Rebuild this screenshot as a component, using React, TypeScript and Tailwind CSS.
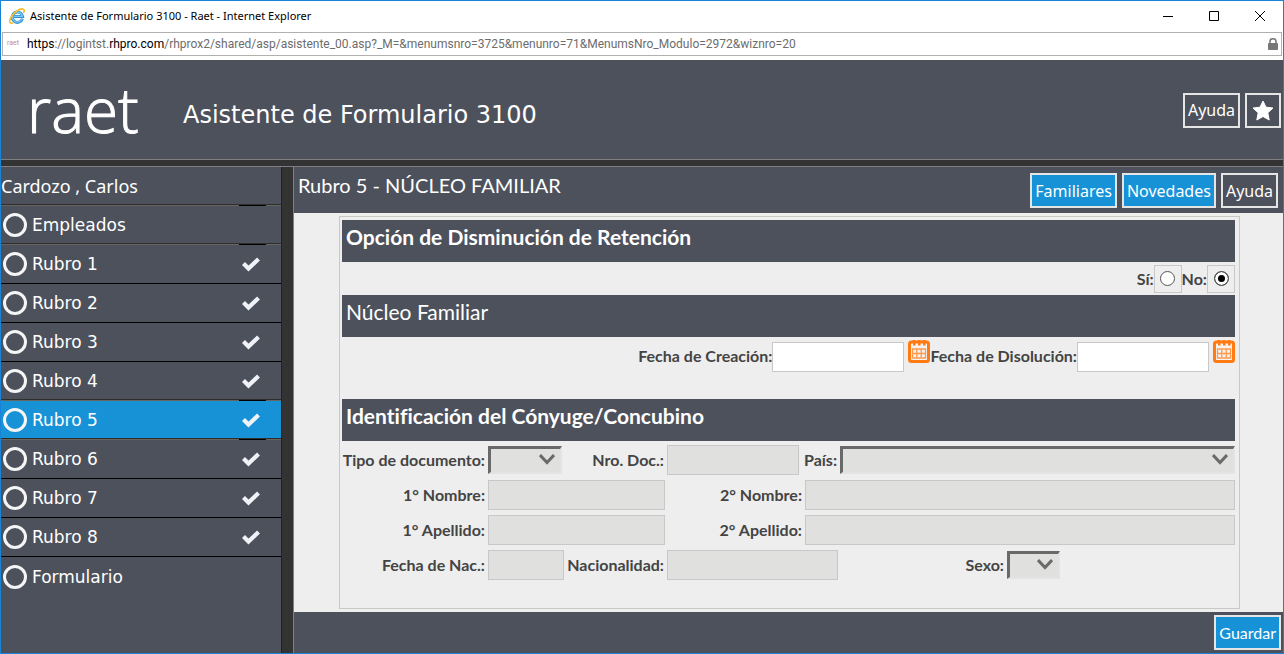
import { ReactNode, useState } from "react"

interface Paso {
    name: string,
    done?: boolean,
    soft?: boolean,
}

const pasos: Paso[] = [
    { name: "Empleados", soft: true },
    { name: "Rubro 1", done: true },
    { name: "Rubro 2", done: true },
    { name: "Rubro 3", done: true },
    { name: "Rubro 4", done: true, soft: true },
    { name: "Rubro 5", done: true, soft: true },
    { name: "Rubro 6", done: true },
    { name: "Rubro 7", done: true },
    { name: "Rubro 8", done: true },
    { name: "Formulario" },
]

function IeLogo() {
    return (
        <svg viewBox="0 0 16 16" className="size-4" aria-hidden="true">
            <path d="M13.4 10.8A5.2 5.2 0 1 1 13.6 8.400H5" fill="none" stroke="#2f8fd0" strokeWidth="3" />
            <path d="M13.2 10.6A5 5 0 1 1 13.4 8.400H5" fill="none" stroke="#7ccbf2" strokeWidth="1.300" />
            <path d="M3.500 15C-.5 16 0 11.500 3.500 7.200S12-.3 14.500 1.300c1 .7.800 2 .2 3.200" fill="none" stroke="#f7bd2a" strokeWidth="1.600" strokeLinecap="round" />
        </svg>
    )
}

function Candado() {
    return (
        <svg viewBox="0 0 10 12" className="h-3 w-[10px]" aria-hidden="true">
            <path d="M2 6V3.500a3 2.700 0 0 1 6 0V6" fill="none" stroke="#777" strokeWidth="1.500" />
            <rect y="5" width="10" height="7" rx="1" fill="#777" />
        </svg>
    )
}

function Calendario() {
    return (
        <svg viewBox="0 0 22 23" className="h-[23px] w-[22px]" aria-hidden="true">
            <rect x="1.500" y="2" width="19" height="19.500" rx="2" fill="#f6f2ef" stroke="#ff7a12" strokeWidth="3" />
            <path d="M4.500 0h3v2h-3zM9.500 0h3v2h-3zM14.500 0h3v2h-3z" fill="#ff7a12" />
            <path d="M5 1h2.500v4.500H5zM10 1h2.500v4.500H10zM15 1h2.500v4.500H15z" fill="#ff7a12" />
            <path d="M4.500 9h13v9h-13zM4.500 13.500h13M8.800 9v9M13.200 9v9" fill="none" stroke="#ff9a4d" strokeWidth="1.300" />
        </svg>
    )
}

function Estrella() {
    return (
        <svg viewBox="0 0 22 21" className="h-[21px] w-[22px]" aria-hidden="true">
            <path d="M11 1l3 6.200 7 .8-5.200 4.800L17.200 20 11 16.500 4.800 20l1.400-7.200L1 8l7-.8z" fill="#fff" strokeLinejoin="round" stroke="#fff" />
        </svg>
    )
}

function Tilde() {
    return (
        <svg viewBox="0 0 20 16" className="h-4 w-5" aria-hidden="true">
            <path d="M2.500 7.500l5 5 10-9.500" fill="none" stroke="#f0f2f8" strokeWidth="4.200" />
        </svg>
    )
}

function Boton(props: { children: ReactNode, blue?: boolean, label?: string }) {
    return (
        <button type="button" aria-label={props.label} className={`flex h-[35px] items-center border-2 border-neutral-200 px-[3px] font-['Noto_Sans',sans-serif] text-base whitespace-nowrap text-white ${props.blue ? "bg-[#1892d6]" : "bg-[#4d515c]"}`}>
            {props.children}
        </button>
    )
}

function Titulo(props: { children: ReactNode, bold?: boolean }) {
    return (
        <h2 className={`h-[42px] bg-[#4d515c] pl-1 text-[21px] leading-[34px] text-white ${props.bold ? "font-bold" : "font-normal"}`}>{props.children}</h2>
    )
}

function Etiqueta(props: { children: ReactNode, htmlFor: string, width: string }) {
    return (
        <label htmlFor={props.htmlFor} className={`shrink-0 pr-[3px] text-right whitespace-nowrap ${props.width}`}>{props.children}</label>
    )
}

function Texto(props: { id: string, width: string }) {
    return (
        <input id={props.id} type="text" disabled className={`h-[30px] min-w-0 border border-[#c8c8c8] bg-[#e0e0de] px-1 ${props.width}`} />
    )
}

function Lista(props: { id: string, width: string }) {
    return (
        <div className={`relative h-7 min-w-0 ${props.width}`}>
            <select id={props.id} disabled className="h-full w-full appearance-none border-t-[3px] border-r-2 border-b-2 border-l-[3px] border-t-[#696969] border-r-[#e3e3e3] border-b-[#e3e3e3] border-l-[#696969] bg-[#e0e0de] opacity-100">
                <option></option>
            </select>
            <svg viewBox="0 0 16 11" className="pointer-events-none absolute top-2 right-[7px] h-[11px] w-4" aria-hidden="true">
                <path d="M1 1l7 7.500L15 1" fill="none" stroke="#6a6a6a" strokeWidth="3" />
            </svg>
        </div>
    )
}

function Fecha(props: { id: string, label: string }) {
    return (
        <div className="flex">
            <label htmlFor={props.id} className="pt-[5px] leading-[22px] whitespace-nowrap">{props.label}</label>
            <input id={props.id} type="text" className="mt-[2px] h-[30px] w-[132px] border border-[#c8c8c8] bg-white px-1" />
            <button type="button" aria-label="Calendario" className="ml-1 h-[23px]"><Calendario /></button>
        </div>
    )
}

function Opcion(props: { id: string, label: string, checked: boolean, onChange: () => void }) {
    return (
        <label htmlFor={props.id} className="flex items-center">
            {props.label}
            <span className="flex size-7 items-center justify-center border border-[#c8c8c8]">
                <input id={props.id} type="radio" name="disminucion" checked={props.checked} onChange={props.onChange} className="size-[15px] appearance-none rounded-full border border-[#555] bg-white checked:bg-black checked:shadow-[inset_0_0_0_3px_#fff]" />
            </span>
        </label>
    )
}

function Divisor(props: { soft?: boolean }) {
    if (!props.soft) return <div className="h-px bg-black"></div>
    return (
        <div className="flex h-[2px] justify-end border-t border-[#2e2e2e] bg-[#66665f] pr-[15px]">
            <span className="w-[27px] bg-black"></span>
        </div>
    )
}

function Menu() {
    const [active, setActive] = useState("Rubro 5")
    return (
        <nav className="w-[280px] shrink-0 bg-[#4d515c] font-['DejaVu_Sans',sans-serif] text-[17px] text-white">
            <div className="flex h-[39px] flex-col">
                <div className="flex-1 pt-1 font-['Noto_Sans',sans-serif] text-lg leading-[30px]">Cardozo , Carlos</div>
                <Divisor soft />
            </div>
            {pasos.map((paso, i) => (
                <div key={paso.name} className="flex h-[39px] flex-col">
                    <button
                        type="button"
                        onClick={() => setActive(paso.name)}
                        className={`flex w-full flex-1 items-center pr-[20px] pl-[2px] text-left ${paso.name === active ? "bg-[#1892d6]" : ""}`}
                    >
                        <span className="mr-[5px] size-6 rounded-full border-[3px] border-neutral-100"></span>
                        <span className="flex-1 pt-[2px]">{paso.name}</span>
                        {paso.done && <Tilde />}
                    </button>
                    {i < pasos.length - 1 && <Divisor soft={paso.soft} />}
                </div>
            ))}
        </nav>
    )
}

export default function App() {
    const [opcion, setOpcion] = useState("no")
    return (
        <div className="flex min-h-screen flex-col border border-[#1883d7] bg-white font-[Lato,sans-serif] [font-variant-ligatures:none]">
            <div className="flex h-[31px] items-center pb-px pl-2 font-['Noto_Sans',sans-serif] text-[11px] text-black">
                <IeLogo />
                <span className="ml-[5px] flex-1">Asistente de Formulario 3100 - Raet - Internet Explorer</span>
                <button type="button" aria-label="Minimizar" className="flex w-[46px] justify-center">
                    <svg viewBox="0 0 10 10" className="size-[10px]"><path d="M0 5.500h10" stroke="#000" /></svg>
                </button>
                <button type="button" aria-label="Maximizar" className="flex w-[46px] justify-center">
                    <svg viewBox="0 0 10 10" className="size-[10px]"><path d="M.5.5h9v9h-9z" fill="none" stroke="#000" /></svg>
                </button>
                <button type="button" aria-label="Cerrar" className="flex w-[46px] justify-center">
                    <svg viewBox="0 0 10 10" className="size-[10px]"><path d="M0 0l10 10M10 0L0 10" stroke="#000" /></svg>
                </button>
            </div>
            <div className="mx-px mb-1 flex h-6 items-center border border-[#b0b0b0] pr-[3px] pl-1 font-[Roboto,sans-serif] text-xs text-[#6d6d6d]">
                <span className="w-5 text-[7px] text-[#c98a8a]">raet</span>
                <span className="flex-1 whitespace-nowrap"><span className="text-black">https</span>://logintst.<span className="text-black">rhpro.com</span>/rhprox2/shared/asp/asistente_00.asp?_M=&amp;menumsnro=3725&amp;menunro=71&amp;MenumsNro_Modulo=2972&amp;wiznro=20</span>
                <Candado />
            </div>

            <header className="flex h-[100px] items-center border-b border-[#808080] bg-[#4d515c] pr-[2px] pl-[26px] text-white">
                <span className="w-[156px] pb-[2px] font-['Open_Sans',sans-serif] text-[62px] leading-[80px] font-light [-webkit-text-stroke:1px_#fff]">raet</span>
                <h1 className="flex-1 pt-[10px] font-['DejaVu_Sans',sans-serif] text-2xl">Asistente de Formulario 3100</h1>
                <div className="flex gap-[5px] pt-px">
                    <Boton>Ayuda</Boton>
                    <Boton label="Favoritos"><span className="px-[2px]"><Estrella /></span></Boton>
                </div>
            </header>
            <div className="h-[7px] border-b border-[#808080] bg-[#333]"></div>

            <div className="flex flex-1">
                <Menu />
                <div className="w-[13px] shrink-0 border-r border-l border-r-[#808080] border-l-[#222] bg-[#333]"></div>
                <main className="flex min-w-0 flex-1 flex-col bg-[#eee]">
                    <div className="flex h-[46px] items-start bg-[#4d515c] pt-[6px] pr-[5px] pl-1 text-white">
                        <h2 className="flex-1 text-xl leading-6">Rubro 5 - NÚCLEO FAMILIAR</h2>
                        <div className="flex gap-[5px]">
                            <Boton blue>Familiares</Boton>
                            <Boton blue>Novedades</Boton>
                            <Boton>Ayuda</Boton>
                        </div>
                    </div>

                    <form className="mt-[3px] mr-[43px] mb-[3px] ml-[45px] flex-1 border border-[#c8c8c8] py-[3px] pr-1 pl-[2px] text-base font-bold text-[#444]">
                        <Titulo bold>Opción de Disminución de Retención</Titulo>
                        <div className="flex h-[33px] items-center justify-end">
                            <Opcion id="si" label="Sí:" checked={opcion === "si"} onChange={() => setOpcion("si")} />
                            <Opcion id="no" label="No:" checked={opcion === "no"} onChange={() => setOpcion("no")} />
                        </div>
                        <Titulo>Núcleo Familiar</Titulo>
                        <div className="flex h-[62px] justify-end pt-[3px]">
                            <Fecha id="creacion" label="Fecha de Creación:" />
                            <Fecha id="disolucion" label="Fecha de Disolución:" />
                        </div>
                        <Titulo bold>Identificación del Cónyuge/Concubino</Titulo>
                        <div className="flex flex-col gap-[5px] pt-1">
                            <div className="flex h-[30px] items-center">
                                <Etiqueta htmlFor="tipo" width="w-[146px]">Tipo de documento:</Etiqueta>
                                <Lista id="tipo" width="w-[74px]" />
                                <Etiqueta htmlFor="doc" width="w-[105px]">Nro. Doc.:</Etiqueta>
                                <Texto id="doc" width="w-[132px]" />
                                <Etiqueta htmlFor="pais" width="w-[41px]">País:</Etiqueta>
                                <Lista id="pais" width="flex-1" />
                            </div>
                            <div className="flex h-[30px] items-center">
                                <Etiqueta htmlFor="nombre1" width="w-[146px]">1° Nombre:</Etiqueta>
                                <Texto id="nombre1" width="w-[177px]" />
                                <Etiqueta htmlFor="nombre2" width="w-[140px]">2° Nombre:</Etiqueta>
                                <Texto id="nombre2" width="flex-1" />
                            </div>
                            <div className="flex h-[30px] items-center">
                                <Etiqueta htmlFor="apellido1" width="w-[146px]">1° Apellido:</Etiqueta>
                                <Texto id="apellido1" width="w-[177px]" />
                                <Etiqueta htmlFor="apellido2" width="w-[140px]">2° Apellido:</Etiqueta>
                                <Texto id="apellido2" width="flex-1" />
                            </div>
                            <div className="flex h-[30px] items-center">
                                <Etiqueta htmlFor="nacimiento" width="w-[146px]">Fecha de Nac.:</Etiqueta>
                                <Texto id="nacimiento" width="w-[76px]" />
                                <Etiqueta htmlFor="nacionalidad" width="w-[103px]">Nacionalidad:</Etiqueta>
                                <Texto id="nacionalidad" width="w-[171px]" />
                                <Etiqueta htmlFor="sexo" width="w-[169px]">Sexo:</Etiqueta>
                                <Lista id="sexo" width="w-[53px]" />
                            </div>
                        </div>
                    </form>

                    <footer className="flex h-[41px] items-center justify-end bg-[#4d515c] pr-[2px]">
                        <Boton blue><span className="font-[Lato,sans-serif]">Guardar</span></Boton>
                    </footer>
                </main>
            </div>
        </div>
    )
}
